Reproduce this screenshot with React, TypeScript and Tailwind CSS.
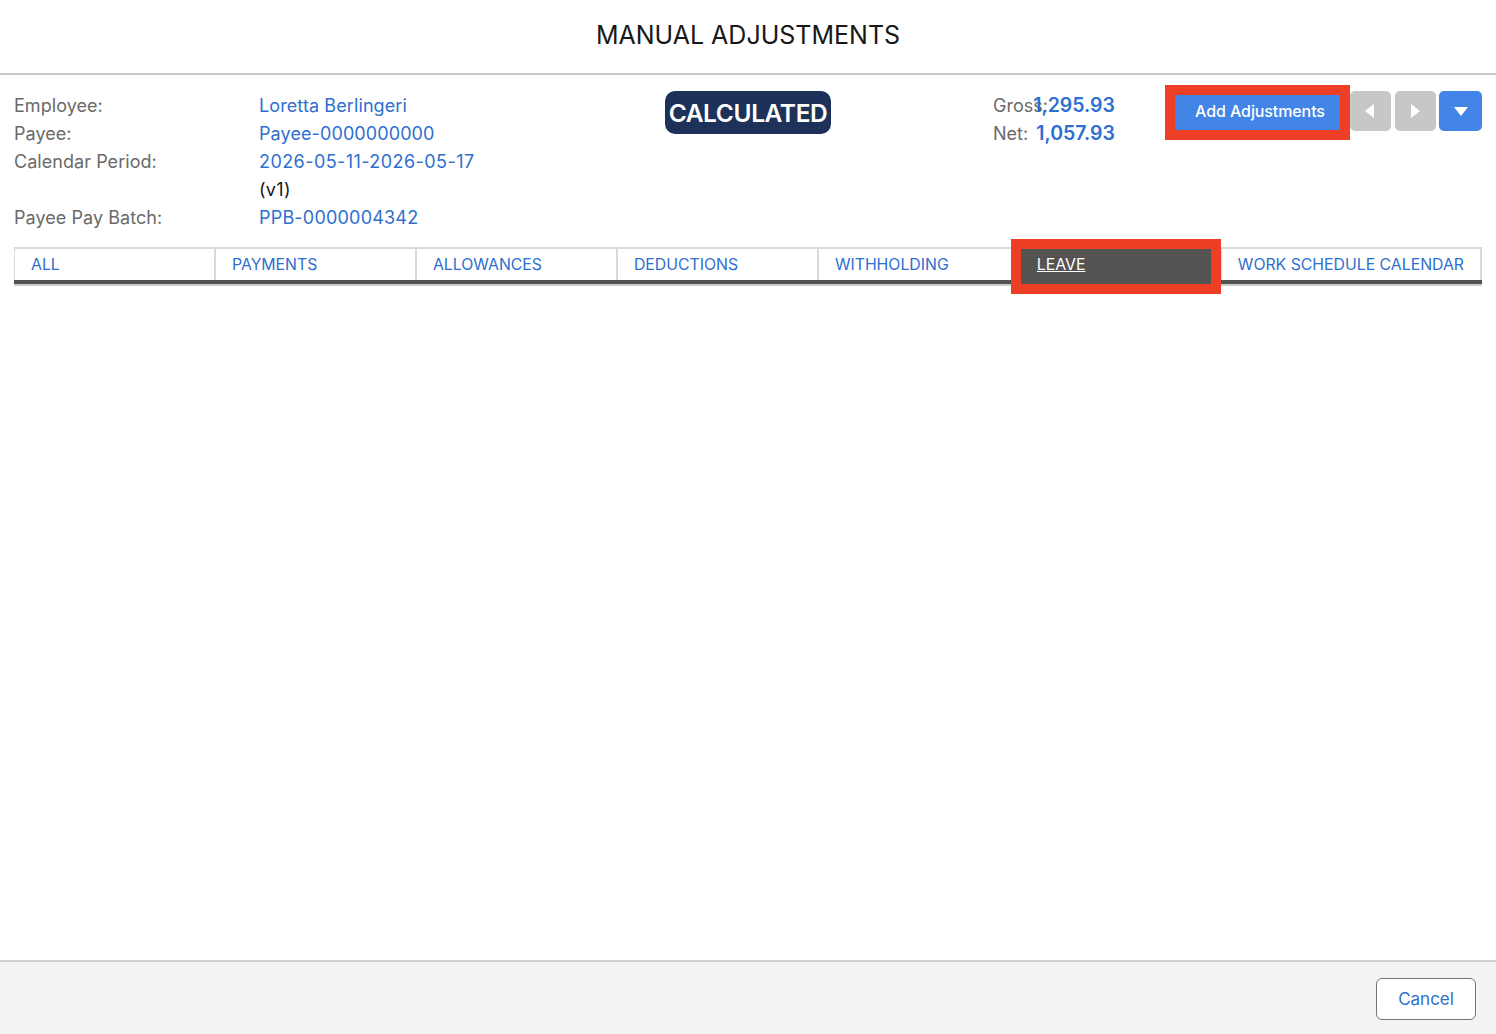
import React from "react";

function Row({ label, value, valueClass }: { label: string; value: string; valueClass: string }) {
  return (
    <div className="flex h-[28px] items-center text-[18px]">
      <div className="w-[245px] text-[#6a6a6a] tracking-[0.05px]">{label}</div>
      <div className={valueClass}>{value}</div>
    </div>
  );
}

function Tab({ label, wide, first }: { label: string; wide?: boolean; first?: boolean }) {
  const size = wide ? "flex-1 border-l-2" : first ? "w-[200px] border-l" : "w-[201px] border-l-2";
  return (
    <div
      className={`${size} h-[33px] px-[16px] pb-[2px] flex items-center whitespace-nowrap border-[#d9d9d9] text-[15.8px] text-[#2e6fcf]`}
    >
      {label}
    </div>
  );
}

export default function App() {
  return (
    <div className="h-[1034px] w-full flex flex-col bg-white font-['Inter','Liberation_Sans',sans-serif] overflow-hidden">
      <header className="h-[75px] shrink-0 border-b-2 border-[#c9c9c9] flex items-center justify-center pb-[1px]">
        <h1 className="text-[25px] font-normal text-[#181818]">MANUAL ADJUSTMENTS</h1>
      </header>

      <main className="flex-1 px-[14px] pt-[16px]">
        <div className="flex items-start">
          <div className="w-[651px]">
            <Row label="Employee:" value="Loretta Berlingeri" valueClass="text-[#2e6fcf] tracking-[0.1px]" />
            <Row label="Payee:" value="Payee-0000000000" valueClass="text-[#2e6fcf] tracking-[0.1px]" />
            <Row label="Calendar Period:" value="2026-05-11-2026-05-17" valueClass="text-[#2e6fcf] tracking-[0.43px]" />
            <Row label="" value="(v1)" valueClass="text-[#181818] tracking-[0.3px]" />
            <Row label="Payee Pay Batch:" value="PPB-0000004342" valueClass="text-[#2e6fcf] tracking-[0.2px]" />
          </div>

          <div className="w-[166px] h-[43px] pt-[2px] rounded-[10px] bg-[#1e3158] text-white text-[24.5px] font-semibold flex items-center justify-center whitespace-nowrap tracking-[-0.4px]">
            CALCULATED
          </div>

          <div className="ml-[162px] w-[122px] text-[18px]">
            <div className="flex h-[28px] items-center relative text-[#6a6a6a]">
              Gross:
              <span className="absolute right-0 mt-[2px] font-semibold text-[#2e6fcf] text-[19.5px]">1,295.93</span>
            </div>
            <div className="flex h-[28px] items-center relative text-[#6a6a6a]">
              Net:
              <span className="absolute right-0 mt-[2px] font-semibold text-[#2e6fcf] text-[19.5px]">1,057.93</span>
            </div>
          </div>

          <button className="ml-[60px] mt-[4px] w-[165px] h-[35px] pl-[5px] pb-[4px] bg-[#4285e6] text-white text-[16px] font-medium tracking-[-0.1px] outline-[10px] outline-solid outline-[#ec3f25]">
            Add Adjustments
          </button>

          <div className="ml-[10px] flex gap-[4px]">
            <button className="w-[41px] h-[40px] rounded-[5px] bg-[#c8c7c5] flex items-center justify-center pr-[2px]">
              <svg width="11" height="16" viewBox="0 0 11 16"><path d="M10 1V15L1 8Z" fill="#fff" /></svg>
            </button>
            <button className="w-[41px] h-[40px] rounded-[5px] bg-[#c8c7c5] flex items-center justify-center">
              <svg width="11" height="16" viewBox="0 0 11 16"><path d="M1 1V15L10 8Z" fill="#fff" /></svg>
            </button>
            <button className="w-[43px] h-[40px] -ml-[1px] rounded-[5px] bg-[#4285e6] flex items-center justify-center">
              <svg width="16" height="11" viewBox="0 0 16 11"><path d="M1 1H15L8 10Z" fill="#fff" /></svg>
            </button>
          </div>
        </div>

        <nav className="mt-[16px] border-t-2 border-r-2 border-[#d9d9d9] flex h-[39px] items-start relative">
          <div className="absolute left-0 right-[-2px] top-[31px] h-[6px] border-b-2 border-[#cccccc] bg-[#555352]" />
          <Tab label="ALL" first />
          <Tab label="PAYMENTS" />
          <Tab label="ALLOWANCES" />
          <Tab label="DEDUCTIONS" />
          <Tab label="WITHHOLDING" />
          <div className="relative z-10 ml-[3px] w-[190px] h-[35px] px-[16px] pb-[4px] flex items-center bg-[#555352] text-white text-[15.8px] underline outline-[10px] outline-solid outline-[#ec3f25]">
            LEAVE
          </div>
          <div className="w-[9px] shrink-0" />
          <Tab label="WORK SCHEDULE CALENDAR" wide />
        </nav>
      </main>

      <footer className="h-[74px] shrink-0 bg-[#f3f3f3] border-t-2 border-[#cfcfcf] flex items-start justify-end pt-[16px] pr-[20px]">
        <button className="w-[100px] h-[42px] pt-[2px] rounded-[6px] bg-white border border-[#747474] text-[17px] text-[#2e6fcf]">
          Cancel
        </button>
      </footer>
    </div>
  );
}
